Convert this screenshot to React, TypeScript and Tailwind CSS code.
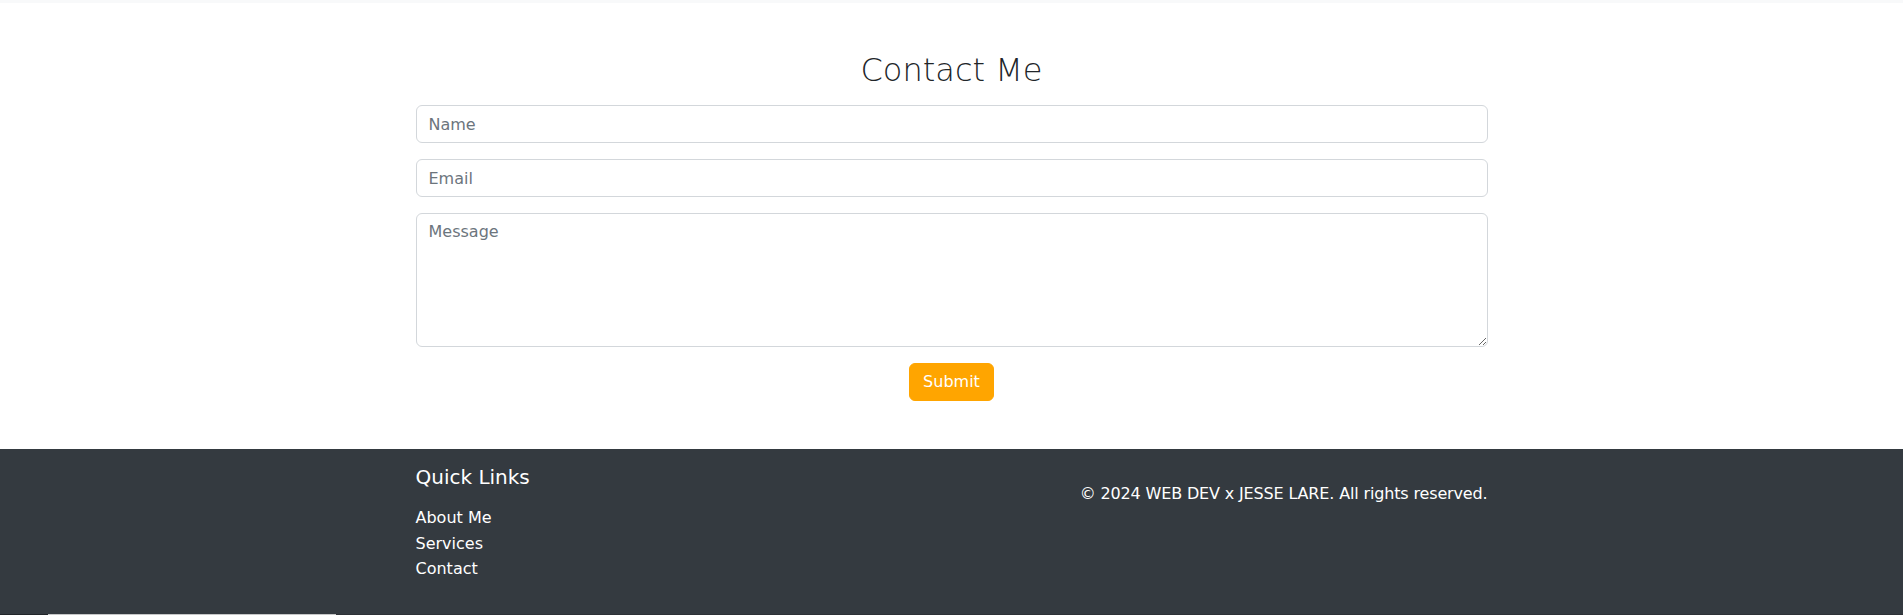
export default function App() {
  return (
    <div className="min-h-screen bg-white font-['DejaVu_Sans',sans-serif] text-[#212529]">
      {/* Navbar edge */}
      <div className="h-[3px] bg-[#f8f9fa]" />

      {/* Contact */}
      <section className="pt-12 pb-12">
        <div className="mx-auto w-[1072px]">
          <h2 className="mb-4 text-center text-[32px] font-light leading-[1.2] text-[#212529]">
            Contact Me
          </h2>
          <form className="flex flex-col gap-4" onSubmit={(e) => e.preventDefault()}>
            <input
              type="text"
              placeholder="Name"
              className="h-[38px] w-full rounded-md border border-[#d3d7db] bg-white px-3 text-base text-[#212529] outline-none placeholder:text-[#6c757d]"
            />
            <input
              type="email"
              placeholder="Email"
              className="h-[38px] w-full rounded-md border border-[#d3d7db] bg-white px-3 text-base text-[#212529] outline-none placeholder:text-[#6c757d]"
            />
            <textarea
              rows={5}
              placeholder="Message"
              className="h-[134px] w-full rounded-md border border-[#d3d7db] bg-white px-3 py-1.5 text-base leading-6 text-[#212529] outline-none placeholder:text-[#6c757d]"
            />
            <div className="flex justify-center">
              <button
                type="submit"
                className="h-[38px] rounded-md border border-[#ffa500] bg-[#ffa500] px-[13px] text-base leading-6 text-white"
              >
                Submit
              </button>
            </div>
          </form>
        </div>
      </section>

      {/* Footer */}
      <footer className="h-[165px] bg-[#343a40] text-white">
        <div className="mx-auto flex w-[1072px] justify-between pt-4">
          <div>
            <h5 className="mb-4 text-xl leading-6">Quick Links</h5>
            <ul className="text-base leading-[25.5px]">
              <li>
                <a href="#about">About Me</a>
              </li>
              <li>
                <a href="#services">Services</a>
              </li>
              <li>
                <a href="#contact">Contact</a>
              </li>
            </ul>
          </div>
          <p className="mt-[17px] text-base leading-6 tracking-[-0.15px]">
            © 2024 WEB DEV x JESSE LARE. All rights reserved.
          </p>
        </div>
      </footer>
      <div className="flex h-px bg-[#2d3136]">
        <div className="w-12 bg-[#212529]" />
        <div className="w-[288px] bg-[#c6c7c8]" />
      </div>
    </div>
  );
}
